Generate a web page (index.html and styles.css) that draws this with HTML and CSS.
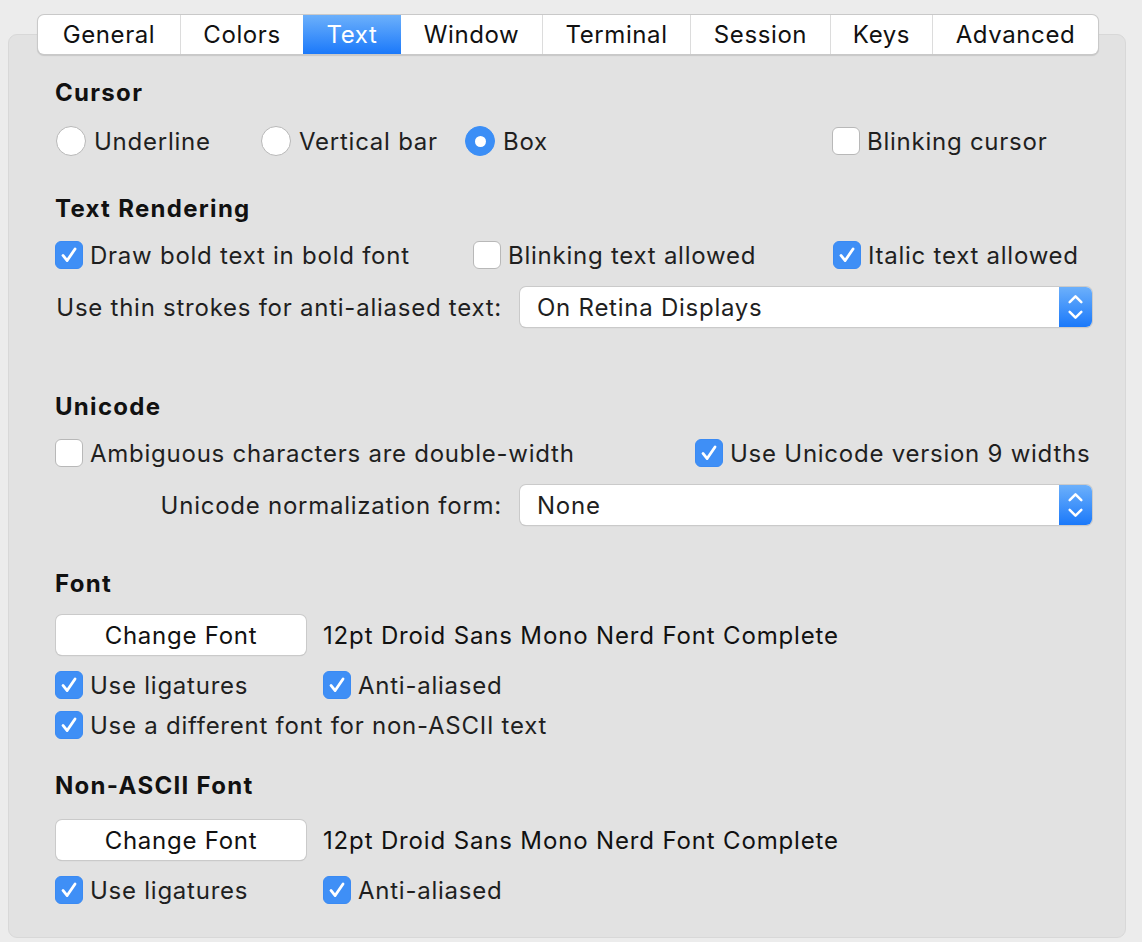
FILE: index.html
```html
<!DOCTYPE html>
<html>
<head>
<meta charset="utf-8">
<link rel="stylesheet" href="styles.css">
</head>
<body>
<div class="window">
  <div class="tabs">
    <div class="tab t-general">General</div>
    <div class="tab t-colors">Colors</div>
    <div class="tab t-text active">Text</div>
    <div class="tab t-window">Window</div>
    <div class="tab t-terminal">Terminal</div>
    <div class="tab t-session">Session</div>
    <div class="tab t-keys">Keys</div>
    <div class="tab t-advanced">Advanced</div>
  </div>
  <div class="panel">
    <div class="heading h-cursor">Cursor</div>
    <div class="row r-radio">
      <label class="opt w-underline"><span class="radio"></span>Underline</label>
      <label class="opt w-vbar"><span class="radio"></span>Vertical bar</label>
      <label class="opt w-box"><span class="radio on"></span>Box</label>
      <label class="opt"><span class="check"></span>Blinking cursor</label>
    </div>

    <div class="heading h-render">Text Rendering</div>
    <div class="row r-tight">
      <label class="opt w-bold"><span class="check on"><svg viewBox="0 0 28 28"><path d="M7.5 14.5 L12 20 L20.5 7.5"/></svg></span>Draw bold text in bold font</label>
      <label class="opt w-blink"><span class="check"></span>Blinking text allowed</label>
      <label class="opt"><span class="check on"><svg viewBox="0 0 28 28"><path d="M7.5 14.5 L12 20 L20.5 7.5"/></svg></span>Italic text allowed</label>
    </div>
    <div class="row r-popup">
      <span class="label l-thin">Use thin strokes for anti-aliased text:</span>
      <div class="popup"><span class="popup-val">On Retina Displays</span><span class="stepper"><svg viewBox="0 0 34 40"><path d="M11 15 L17 9 L23 15"/><path d="M11 25 L17 31 L23 25"/></svg></span></div>
    </div>

    <div class="heading h-unicode">Unicode</div>
    <div class="row r-tight">
      <label class="opt w-ambig"><span class="check"></span>Ambiguous characters are double-width</label>
      <label class="opt"><span class="check on"><svg viewBox="0 0 28 28"><path d="M7.5 14.5 L12 20 L20.5 7.5"/></svg></span>Use Unicode version 9 widths</label>
    </div>
    <div class="row r-popup">
      <span class="label l-norm">Unicode normalization form:</span>
      <div class="popup"><span class="popup-val">None</span><span class="stepper"><svg viewBox="0 0 34 40"><path d="M11 15 L17 9 L23 15"/><path d="M11 25 L17 31 L23 25"/></svg></span></div>
    </div>

    <div class="heading h-font">Font</div>
    <div class="row r-button">
      <div class="button">Change Font</div>
      <span class="fontname">12pt Droid Sans Mono Nerd Font Complete</span>
    </div>
    <div class="row r-after-button">
      <label class="opt w-lig"><span class="check on"><svg viewBox="0 0 28 28"><path d="M7.5 14.5 L12 20 L20.5 7.5"/></svg></span>Use ligatures</label>
      <label class="opt"><span class="check on"><svg viewBox="0 0 28 28"><path d="M7.5 14.5 L12 20 L20.5 7.5"/></svg></span>Anti-aliased</label>
    </div>
    <div class="row r-none">
      <label class="opt"><span class="check on"><svg viewBox="0 0 28 28"><path d="M7.5 14.5 L12 20 L20.5 7.5"/></svg></span>Use a different font for non-ASCII text</label>
    </div>

    <div class="heading h-nonascii">Non-ASCII Font</div>
    <div class="row r-button2">
      <div class="button">Change Font</div>
      <span class="fontname">12pt Droid Sans Mono Nerd Font Complete</span>
    </div>
    <div class="row r-after-button">
      <label class="opt w-lig"><span class="check on"><svg viewBox="0 0 28 28"><path d="M7.5 14.5 L12 20 L20.5 7.5"/></svg></span>Use ligatures</label>
      <label class="opt"><span class="check on"><svg viewBox="0 0 28 28"><path d="M7.5 14.5 L12 20 L20.5 7.5"/></svg></span>Anti-aliased</label>
    </div>
  </div>
</div>
</body>
</html>
```

FILE: styles.css
```css
html, body {
  margin: 0;
  padding: 0;
  background: #ececec;
}
body {
  font-family: Inter, "Noto Sans", "Liberation Sans", sans-serif;
  font-size: 24px;
  letter-spacing: 0.75px;
  color: #1f1f1f;
  width: 1142px;
  height: 942px;
  overflow: hidden;
}
.window {
  display: flex;
  flex-direction: column;
  padding: 15px 16px 0 8px;
}
.tabs {
  position: relative;
  z-index: 2;
  align-self: flex-start;
  margin-left: 30px;
  display: flex;
  height: 39px;
  background: #ffffff;
  border-radius: 6px;
  box-shadow: 0 0 0 1px #c9c9c9, 0 1px 1px 1px rgba(0,0,0,0.12);
  overflow: hidden;
}
.tab {
  display: flex;
  align-items: center;
  justify-content: center;
  border-left: 1px solid #dcdcdc;
  color: #111;
  font-size: 24px;
  letter-spacing: 0.6px;
  box-sizing: border-box;
}
.tab:first-child { border-left: none; }
.tab.active {
  background: linear-gradient(#6cb0fb, #1b79fa);
  color: #fff;
  border-left: none;
}
.tab.active + .tab { border-left: none; }
.t-general { width: 142px; }
.t-colors { width: 123px; }
.t-text { width: 98px; }
.t-window { width: 141px; }
.t-terminal { width: 148px; }
.t-session { width: 140px; }
.t-keys { width: 102px; }
.t-advanced { width: 166px; }

.panel {
  margin-top: -20px;
  height: 904px;
  box-sizing: border-box;
  background: #e2e2e2;
  border: 1px solid #d8d8d8;
  border-radius: 9px;
  padding: 43px 0 0 46px;
  display: flex;
  flex-direction: column;
}
.heading {
  height: 30px;
  line-height: 30px;
  font-weight: 700;
  font-size: 24px;
  letter-spacing: 1.3px;
  color: #111;
}
.h-render { margin-top: 33px; }
.h-unicode { margin-top: 65px; }
.h-font { margin-top: 44px; }
.h-nonascii { margin-top: 26px; }

.row {
  height: 40px;
  display: flex;
  align-items: center;
}
.r-radio { margin-top: 13px; }
.r-tight { margin-top: 11px; }
.r-popup { margin-top: 12px; }
.r-none { margin-top: 0; }
.r-button { margin-top: 16px; }
.r-button2 { margin-top: 19px; }
.r-after-button { margin-top: 10px; }

.opt {
  display: flex;
  align-items: center;
  white-space: nowrap;
}
.w-underline { width: 205px; }
.w-vbar { width: 204px; }
.w-box { width: 368px; }
.w-bold { width: 418px; }
.w-blink { width: 360px; }
.w-ambig { width: 640px; }
.w-lig { width: 268px; }

.radio {
  width: 30px;
  height: 30px;
  box-sizing: border-box;
  border-radius: 50%;
  background: #fff;
  border: 1px solid #b8b8b8;
  margin: 0 8px 0 1px;
  display: flex;
  align-items: center;
  justify-content: center;
  flex: none;
}
.radio.on {
  background: #3b8ef6;
  border-color: #3b8ef6;
}
.radio.on::after {
  content: "";
  width: 11px;
  height: 11px;
  border-radius: 50%;
  background: #fff;
}
.check {
  width: 28px;
  height: 28px;
  box-sizing: border-box;
  border-radius: 6px;
  background: #fff;
  border: 1px solid #b8b8b8;
  margin-right: 7px;
  flex: none;
  display: flex;
}
.check.on {
  background: #3f8ff6;
  border-color: #3a8af3;
}
.check svg {
  width: 26px;
  height: 26px;
}
.check svg path {
  fill: none;
  stroke: #fff;
  stroke-width: 3;
  stroke-linecap: round;
  stroke-linejoin: round;
}

.label {
  text-align: right;
  white-space: nowrap;
  padding-right: 18px;
  box-sizing: border-box;
  width: 465px;
}
.popup {
  width: 572px;
  height: 40px;
  box-sizing: border-box;
  background: #fff;
  border-radius: 6px;
  box-shadow: 0 0 0 1px #cacaca, 0 1px 1px rgba(0,0,0,0.2);
  display: flex;
  align-items: center;
  overflow: hidden;
}
.popup-val {
  flex: 1;
  padding-left: 17px;
}
.stepper {
  width: 33px;
  height: 40px;
  background: linear-gradient(#6cb0fb, #1b79fa);
  display: flex;
}
.stepper svg {
  width: 33px;
  height: 40px;
}
.stepper path {
  fill: none;
  stroke: #fff;
  stroke-width: 2.6;
  stroke-linecap: round;
  stroke-linejoin: round;
}

.button {
  width: 250px;
  height: 40px;
  box-sizing: border-box;
  background: #fff;
  border-radius: 6px;
  box-shadow: 0 0 0 1px #cacaca, 0 1px 1px rgba(0,0,0,0.2);
  display: flex;
  align-items: center;
  justify-content: center;
  margin-left: 1px;
  color: #111;
}
.fontname {
  margin-left: 17px;
  color: #111;
  letter-spacing: 0.85px;
}
```
